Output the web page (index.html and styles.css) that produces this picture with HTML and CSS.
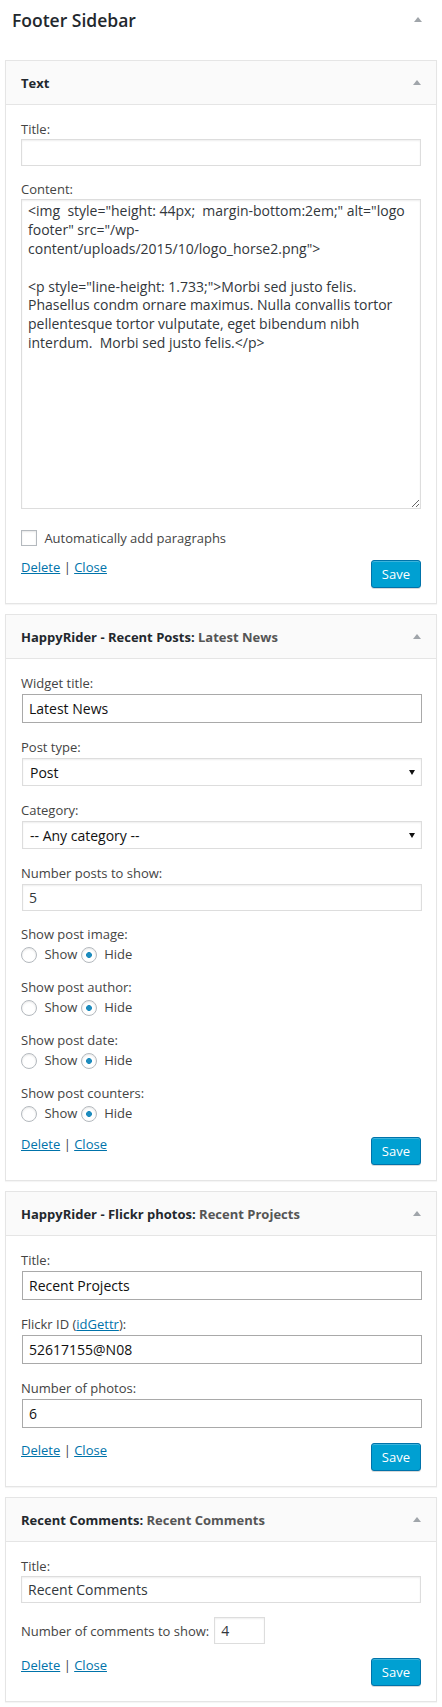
FILE: index.html
```html
<!DOCTYPE html>
<html>
<head>
<meta charset="utf-8">
<title>Footer Sidebar</title>
<link rel="stylesheet" href="styles.css">
</head>
<body>
<div class="sidebar">
  <div class="sidebar-head">
    <h2 class="sidebar-title">Footer Sidebar</h2>
    <svg class="arrow-up sidebar-arrow" width="8" height="5" viewBox="0 0 8 5"><polygon points="0,5 4,0 8,5"/></svg>
  </div>

  <div class="widget">
    <div class="widget-top">
      <h3 class="widget-title">Text</h3>
      <svg class="arrow-up" width="8" height="5" viewBox="0 0 8 5"><polygon points="0,5 4,0 8,5"/></svg>
    </div>
    <div class="widget-inside">
      <div class="field">
        <label class="lbl">Title:</label>
        <input class="input" type="text" value="">
      </div>
      <div class="field">
        <label class="lbl">Content:</label>
        <textarea class="textarea">&lt;img  style="height: 44px;  margin-bottom:2em;" alt="logo footer" src="/wp-content/uploads/2015/10/logo_horse2.png"&gt;

&lt;p style="line-height: 1.733;"&gt;Morbi sed justo felis. Phasellus condm ornare maximus. Nulla convallis tortor pellentesque tortor vulputate, eget bibendum nibh interdum.  Morbi sed justo felis.&lt;/p&gt;</textarea>
      </div>
      <div class="check-row"><input type="checkbox" class="checkbox"> <label>Automatically add paragraphs</label></div>
      <div class="actions">
        <div class="links"><a href="#">Delete</a> | <a href="#">Close</a></div>
        <button class="save" type="button">Save</button>
      </div>
    </div>
  </div>

  <div class="widget">
    <div class="widget-top">
      <h3 class="widget-title">HappyRider - Recent Posts:<span class="in-title"> Latest News</span></h3>
      <svg class="arrow-up" width="8" height="5" viewBox="0 0 8 5"><polygon points="0,5 4,0 8,5"/></svg>
    </div>
    <div class="widget-inside">
      <div class="field">
        <label class="lbl">Widget title:</label>
        <input class="input dark" type="text" value="Latest News">
      </div>
      <div class="field">
        <label class="lbl">Post type:</label>
        <div class="select"><span>Post</span><svg width="6" height="5" viewBox="0 0 6 5"><polygon points="0,0 6,0 3,5"/></svg></div>
      </div>
      <div class="field">
        <label class="lbl">Category:</label>
        <div class="select"><span>-- Any category --</span><svg width="6" height="5" viewBox="0 0 6 5"><polygon points="0,0 6,0 3,5"/></svg></div>
      </div>
      <div class="field">
        <label class="lbl">Number posts to show:</label>
        <input class="input light-num" type="text" value="5">
      </div>
      <div class="field">
        <label class="lbl">Show post image:</label>
        <div class="radio-row"><input type="radio" class="radio" name="r1"> Show <input type="radio" class="radio" name="r1" checked> Hide</div>
      </div>
      <div class="field">
        <label class="lbl">Show post author:</label>
        <div class="radio-row"><input type="radio" class="radio" name="r2"> Show <input type="radio" class="radio" name="r2" checked> Hide</div>
      </div>
      <div class="field">
        <label class="lbl">Show post date:</label>
        <div class="radio-row"><input type="radio" class="radio" name="r3"> Show <input type="radio" class="radio" name="r3" checked> Hide</div>
      </div>
      <div class="field">
        <label class="lbl">Show post counters:</label>
        <div class="radio-row"><input type="radio" class="radio" name="r4"> Show <input type="radio" class="radio" name="r4" checked> Hide</div>
      </div>
      <div class="actions">
        <div class="links"><a href="#">Delete</a> | <a href="#">Close</a></div>
        <button class="save" type="button">Save</button>
      </div>
    </div>
  </div>

  <div class="widget">
    <div class="widget-top">
      <h3 class="widget-title">HappyRider - Flickr photos:<span class="in-title"> Recent Projects</span></h3>
      <svg class="arrow-up" width="8" height="5" viewBox="0 0 8 5"><polygon points="0,5 4,0 8,5"/></svg>
    </div>
    <div class="widget-inside">
      <div class="field">
        <label class="lbl">Title:</label>
        <input class="input dark" type="text" value="Recent Projects">
      </div>
      <div class="field">
        <label class="lbl">Flickr ID (<a href="#">idGettr</a>):</label>
        <input class="input dark" type="text" value="52617155@N08">
      </div>
      <div class="field">
        <label class="lbl">Number of photos:</label>
        <input class="input dark" type="text" value="6">
      </div>
      <div class="actions">
        <div class="links"><a href="#">Delete</a> | <a href="#">Close</a></div>
        <button class="save" type="button">Save</button>
      </div>
    </div>
  </div>

  <div class="widget">
    <div class="widget-top">
      <h3 class="widget-title">Recent Comments:<span class="in-title"> Recent Comments</span></h3>
      <svg class="arrow-up" width="8" height="5" viewBox="0 0 8 5"><polygon points="0,5 4,0 8,5"/></svg>
    </div>
    <div class="widget-inside">
      <div class="field">
        <label class="lbl">Title:</label>
        <input class="input" type="text" value="Recent Comments">
      </div>
      <div class="field inline-field">
        <label>Number of comments to show:</label>
        <input class="input small" type="text" value="4">
      </div>
      <div class="actions">
        <div class="links"><a href="#">Delete</a> | <a href="#">Close</a></div>
        <button class="save" type="button">Save</button>
      </div>
    </div>
  </div>
</div>
</body>
</html>
```

FILE: styles.css
```css
* {
  box-sizing: border-box;
}

html, body {
  margin: 0;
  background: #fff;
}

body {
  font-family: "Open Sans", "Liberation Sans", sans-serif;
  font-size: 13px;
  color: #444;
}

.sidebar {
  padding: 0 5px;
}

.sidebar-head {
  height: 60px;
  display: flex;
  justify-content: space-between;
  align-items: flex-start;
  padding: 8px 15px 0 7px;
}

.sidebar-title {
  margin: 0;
  font-size: 17.5px;
  line-height: 24px;
  font-weight: 600;
  color: #23282d;
}

.arrow-up {
  display: block;
  fill: #a0a5aa;
  flex: none;
}

.sidebar-arrow {
  margin-top: 9px;
}

.widget {
  border: 1px solid #e5e5e5;
  box-shadow: 0 1px 1px rgba(0, 0, 0, 0.04);
  background: #fff;
  margin-bottom: 10px;
}

.widget-top {
  height: 44px;
  background: #fafafa;
  border-bottom: 1px solid #e5e5e5;
  display: flex;
  align-items: center;
  justify-content: space-between;
  padding: 0 15px;
}

.widget-title {
  margin: 0;
  font-size: 13px;
  line-height: 20px;
  font-weight: 700;
  color: #23282d;
}

.in-title {
  color: #555;
}

.widget-inside {
  padding: 1px 15px 15px;
}

.field {
  display: flow-root;
  margin-top: 13px;
}

.lbl {
  display: block;
  line-height: 20px;
}

a {
  color: #0073aa;
  text-decoration: underline;
}

.input {
  display: block;
  width: 100%;
  height: 27px;
  margin: 0;
  padding: 0 6px;
  border: 1px solid #ddd;
  border-radius: 0;
  box-shadow: inset 0 1px 2px rgba(0, 0, 0, 0.07);
  background: #fff;
  font-family: "Open Sans", "Liberation Sans", sans-serif;
  font-size: 14px;
  color: #32373c;
  outline: none;
}

.input.light-num {
  margin-top: 1px;
  margin-left: 1px;
}

.input.dark {
  height: 29px;
  margin: 1px 0 1px 1px;
  border-color: #a9a9a9;
  box-shadow: none;
  color: #111;
}

.textarea {
  display: block;
  width: 100%;
  height: 310px;
  margin: 0;
  padding: 2px 6px;
  border: 1px solid #ddd;
  box-shadow: inset 0 1px 2px rgba(0, 0, 0, 0.07);
  font-family: "Open Sans", "Liberation Sans", sans-serif;
  font-size: 14px;
  line-height: 1.35;
  color: #32373c;
  outline: none;
}

.select {
  display: flex;
  align-items: center;
  justify-content: space-between;
  width: 100%;
  height: 28px;
  margin: 1px 0 1px 1px;
  padding: 0 6px 0 7px;
  border: 1px solid #ddd;
  box-shadow: inset 0 1px 2px rgba(0, 0, 0, 0.07);
  background: #fff;
  font-size: 14px;
  color: #111;
}

.select svg {
  display: block;
  fill: #111;
}

.check-row {
  margin-top: 21px;
  line-height: 16px;
  height: 16px;
}

.checkbox,
.radio {
  -webkit-appearance: none;
  appearance: none;
  display: inline-block;
  width: 16px;
  height: 16px;
  margin: 0 4px 0 0;
  padding: 0;
  border: 1px solid #b4b9be;
  background: #fff;
  box-shadow: inset 0 1px 2px rgba(0, 0, 0, 0.1);
  vertical-align: top;
  outline: none;
}

.radio {
  border-radius: 50%;
  margin-top: 3px;
}

.radio:checked {
  background: radial-gradient(circle at center, #1e8cbe 0, #1e8cbe 2.6px, #fff 3.2px);
}

.radio-row {
  line-height: 20px;
  height: 20px;
}

.inline-field {
  display: flex;
  align-items: baseline;
  gap: 5px;
}

.inline-field label {
  line-height: 20px;
}

.input.small {
  width: 51px;
  margin-top: 1px;
}

.actions {
  margin-top: 11px;
  display: flex;
  justify-content: space-between;
  align-items: flex-start;
}

.links {
  line-height: 20px;
}

.save {
  margin: 3px 0 0;
  height: 28px;
  padding: 0 10px 1px;
  border: 1px solid #0073aa;
  border-radius: 3px;
  background: #00a0d2;
  box-shadow: inset 0 1px 0 rgba(120, 200, 230, 0.5), 0 1px 0 rgba(0, 0, 0, 0.15);
  color: #fff;
  font-family: "Open Sans", "Liberation Sans", sans-serif;
  font-size: 13px;
  line-height: 26px;
  cursor: pointer;
}
```
